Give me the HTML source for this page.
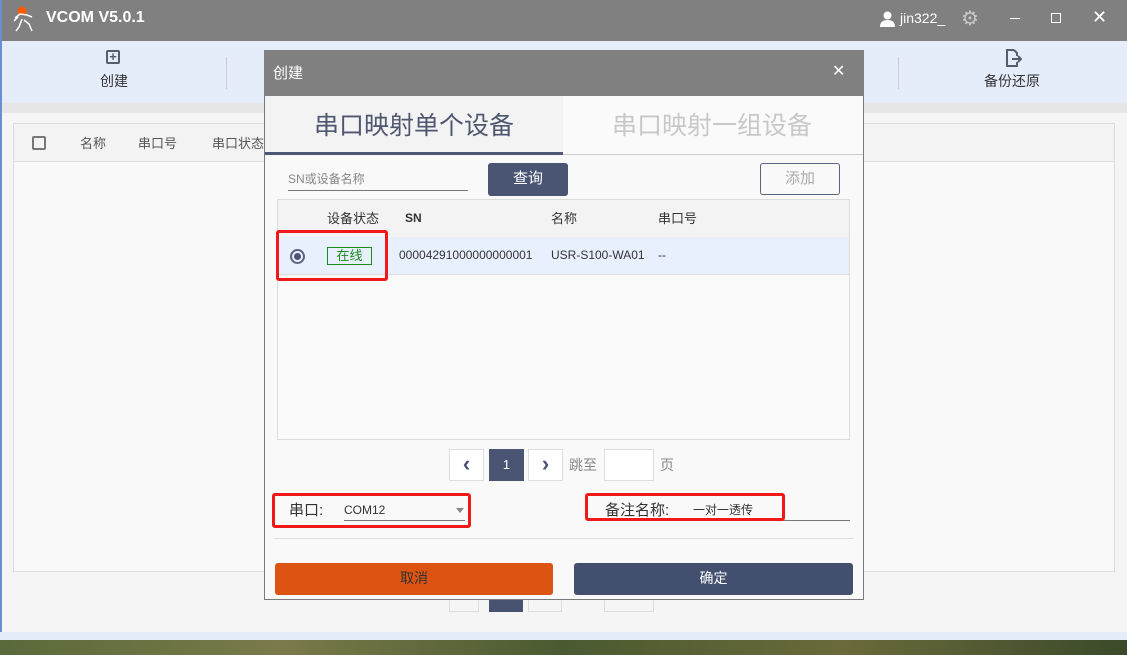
<!DOCTYPE html>
<html><head><meta charset="utf-8"><style>
*{box-sizing:border-box;margin:0;padding:0}
body{width:1127px;height:655px;overflow:hidden;position:relative;background:#f5f5f5;font-family:"Liberation Sans","Noto Sans CJK SC",sans-serif;font-size:13px;color:#333}
.abs{position:absolute}
</style></head><body>
<div class="abs" style="left:0;top:0;width:1127px;height:41px;background:#808080"></div>
<div class="abs" style="left:0;top:0;width:2px;height:640px;background:#6a8fd0"></div>
<svg class="abs" style="left:12px;top:5px" width="26" height="28" viewBox="0 0 26 28"><circle cx="10" cy="6" r="4.5" fill="#ff5a00"/><path d="M3 13 L8 9 L15 10 L20 12 M10 14 L7 22 L4 26 M12 15 L17 19 L20 26 M2 16 L6 12" stroke="#fff" stroke-width="1.5" fill="none"/></svg>
<div class="abs" style="left:46px;top:9px;color:#fff;font-size:16px;font-weight:bold">VCOM V5.0.1</div>
<svg class="abs" style="left:880px;top:11px" width="15" height="16"><circle cx="7.5" cy="4.5" r="4" fill="#fff"/><path d="M0 16 Q0 9 7.5 9 Q15 9 15 16Z" fill="#fff"/></svg>
<div class="abs" style="left:900px;top:10px;color:#fff;font-size:14px">jin322_</div>
<div class="abs" style="left:961px;top:6px;color:#c8c8c8;font-size:20px">⚙</div>
<div class="abs" style="left:1010px;top:18px;width:10px;height:1px;background:#fff"></div>
<div class="abs" style="left:1051px;top:13px;width:10px;height:10px;border:1px solid #fff"></div>
<div class="abs" style="left:1092px;top:7px;color:#fff;font-size:18px">✕</div>

<div class="abs" style="left:2px;top:41px;width:1125px;height:62px;background:#e5edfb"></div>
<div class="abs" style="left:106px;top:50px;width:14px;height:14px;border:2px solid #555e6e;border-radius:2px;font-size:13px;line-height:10px;text-align:center;font-weight:bold;color:#555e6e">+</div>
<div class="abs" style="left:100px;top:71px;font-size:14px">创建</div>
<div class="abs" style="left:226px;top:57px;width:1px;height:32px;background:#c8ccd4"></div>
<div class="abs" style="left:898px;top:57px;width:1px;height:32px;background:#c8ccd4"></div>
<svg class="abs" style="left:1004px;top:48px" width="18" height="20"><path d="M10 2 H3 V18 H10 M10 2 L13 5 V8 M13 14 V18 H10" stroke="#555e6e" stroke-width="2" fill="none"/><path d="M8 11 H17 M14 8 L17 11 L14 14" stroke="#555e6e" stroke-width="2" fill="none"/></svg>
<div class="abs" style="left:984px;top:71px;font-size:14px">备份还原</div>
<div class="abs" style="left:2px;top:103px;width:1125px;height:10px;background:#e6e6e6"></div>

<div class="abs" style="left:13px;top:123px;width:1102px;height:449px;border:1px solid #dcdcdc;background:#f9f9f9"></div>
<div class="abs" style="left:14px;top:124px;width:1100px;height:38px;background:#f3f3f3;border-bottom:1px solid #e0e0e0"></div>
<div class="abs" style="left:32px;top:136px;width:14px;height:14px;border:2px solid #777;border-radius:2px"></div>
<div class="abs" style="left:80px;top:133px;color:#555">名称</div>
<div class="abs" style="left:138px;top:133px;color:#555">串口号</div>
<div class="abs" style="left:212px;top:133px;color:#555">串口状态</div>
<div class="abs" style="left:0;top:632px;width:1127px;height:8px;background:#e5edfb"></div>
<div class="abs" style="left:0;top:640px;width:1127px;height:15px;background:linear-gradient(90deg,#5a6a3a,#7a7a4a,#4a5a30,#6a6a3a,#3a4a2a)"></div>
<div class="abs" style="left:449px;top:598px;width:30px;height:14px;border:1px solid #ddd;border-top:none"></div>
<div class="abs" style="left:489px;top:598px;width:34px;height:14px;background:#46526f"></div>
<div class="abs" style="left:528px;top:598px;width:34px;height:14px;border:1px solid #ddd;border-top:none"></div>
<div class="abs" style="left:604px;top:598px;width:50px;height:14px;border:1px solid #ddd;border-top:none"></div>

<!-- dialog -->
<div class="abs" style="left:264px;top:50px;width:600px;height:550px;border:1px solid #7a7a7a;background:#f9f9f9"></div>
<div class="abs" style="left:264px;top:50px;width:600px;height:46px;background:#808080"></div>
<div class="abs" style="left:273px;top:62px;color:#fff;font-size:15px">创建</div>
<div class="abs" style="left:832px;top:61px;color:#fff;font-size:16px;font-weight:lighter">✕</div>
<div class="abs" style="left:265px;top:96px;width:298px;height:59px;background:#f3f3f3;border-bottom:3px solid #4c5774"></div>
<div class="abs" style="left:563px;top:96px;width:300px;height:59px;background:#fafafa;border-bottom:1px solid #ccc"></div>
<div class="abs" style="left:314px;top:106px;font-size:25px;color:#4f5670">串口映射单个设备</div>
<div class="abs" style="left:612px;top:106px;font-size:25px;color:#c8c8c8">串口映射一组设备</div>

<div class="abs" style="left:288px;top:170px;font-size:12px;color:#888">SN或设备名称</div>
<div class="abs" style="left:288px;top:190px;width:180px;height:1px;background:#777"></div>
<div class="abs" style="left:488px;top:163px;width:80px;height:33px;background:#4a5573;border-radius:3px;color:#fff;font-size:15px;text-align:center;line-height:31px">查询</div>
<div class="abs" style="left:760px;top:163px;width:80px;height:32px;border:1px solid #5a6480;border-radius:3px;color:#aaa;font-size:15px;text-align:center;line-height:30px">添加</div>

<div class="abs" style="left:277px;top:199px;width:573px;height:241px;border:1px solid #dcdcdc;background:#fafafa"></div>
<div class="abs" style="left:278px;top:200px;width:571px;height:37px;background:#f3f3f3"></div>
<div class="abs" style="left:327px;top:208px;color:#333">设备状态</div>
<div class="abs" style="left:405px;top:211px;color:#333;font-weight:bold;font-size:12px">SN</div>
<div class="abs" style="left:551px;top:208px;color:#333">名称</div>
<div class="abs" style="left:658px;top:208px;color:#333">串口号</div>
<div class="abs" style="left:278px;top:237px;width:571px;height:38px;background:#e9f0fd;border-bottom:1px solid #dcdcdc"></div>
<div class="abs" style="left:290px;top:249px;width:15px;height:15px;border:2px solid #5a6480;border-radius:50%"></div>
<div class="abs" style="left:294px;top:253px;width:7px;height:7px;background:#4a5573;border-radius:50%"></div>
<div class="abs" style="left:327px;top:247px;width:45px;height:18px;border:1px solid #1a8a1a;color:#1a8a1a;text-align:center;line-height:15px">在线</div>
<div class="abs" style="left:399px;top:248px;font-size:12px">00004291000000000001</div>
<div class="abs" style="left:551px;top:248px;font-size:12px">USR-S100-WA01</div>
<div class="abs" style="left:658px;top:248px;font-size:12px">--</div>
<div class="abs" style="left:276px;top:230px;width:112px;height:51px;border:3px solid #f01818;border-radius:3px"></div>

<div class="abs" style="left:449px;top:449px;width:35px;height:32px;border:1px solid #ddd;background:#fff;color:#4a5573;font-size:22px;text-align:center;line-height:28px;font-weight:bold">‹</div>
<div class="abs" style="left:489px;top:449px;width:35px;height:32px;background:#4a5573;color:#fff;font-size:13px;text-align:center;line-height:32px">1</div>
<div class="abs" style="left:528px;top:449px;width:35px;height:32px;border:1px solid #ddd;background:#fff;color:#4a5573;font-size:22px;text-align:center;line-height:28px;font-weight:bold">›</div>
<div class="abs" style="left:569px;top:455px;font-size:14px;color:#888">跳至</div>
<div class="abs" style="left:604px;top:449px;width:50px;height:32px;border:1px solid #ddd;background:#fff"></div>
<div class="abs" style="left:660px;top:455px;font-size:14px;color:#888">页</div>

<div class="abs" style="left:289px;top:499px;font-size:15px">串口:</div>
<div class="abs" style="left:344px;top:503px;font-size:12px">COM12</div>
<div class="abs" style="left:456px;top:508px;border:4px solid transparent;border-top:5px solid #888"></div>
<div class="abs" style="left:344px;top:520px;width:121px;height:1px;background:#777"></div>
<div class="abs" style="left:272px;top:493px;width:199px;height:35px;border:3px solid #f01818;border-radius:3px"></div>
<div class="abs" style="left:605px;top:499px;font-size:15px">备注名称:</div>
<div class="abs" style="left:693px;top:501px;font-size:12px">一对一透传</div>
<div class="abs" style="left:600px;top:520px;width:250px;height:1px;background:#777"></div>
<div class="abs" style="left:585px;top:493px;width:200px;height:28px;border:3px solid #f01818;border-radius:3px"></div>
<div class="abs" style="left:274px;top:538px;width:579px;height:1px;background:#ddd"></div>
<div class="abs" style="left:275px;top:563px;width:278px;height:32px;background:#dc5312;border-radius:3px;text-align:center;line-height:31px;font-size:14px;color:#333">取消</div>
<div class="abs" style="left:574px;top:563px;width:279px;height:32px;background:#424f6f;border-radius:3px;text-align:center;line-height:31px;font-size:14px;color:#fff">确定</div>
</body></html>
